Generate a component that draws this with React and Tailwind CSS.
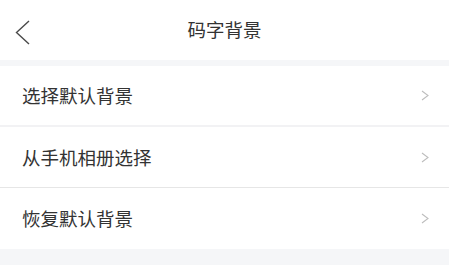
import React from 'react';

const items = [
  { label: '选择默认背景', border: 'border-b-2 border-[#f2f2f4]' },
  { label: '从手机相册选择', border: 'border-b border-[#e6e6e6]' },
  { label: '恢复默认背景', border: '' },
];

const App = () => {
  return (
    <div className="w-[449px] h-[265px] bg-[#f5f6f8] overflow-hidden" style={{ fontFamily: '"Noto Sans CJK SC", "Noto Sans", sans-serif' }}>
      <div className="h-[60px] bg-white flex items-center relative">
        <svg className="absolute left-[15px] top-[20px]" width="15" height="25" viewBox="0 0 15 25">
          <path d="M14 1 L1.5 12.5 L14 24" fill="none" stroke="#4a4a4a" strokeWidth="1.4" />
        </svg>
        <div className="w-full text-center text-[18.5px] text-[#333] leading-none pb-[2px]">码字背景</div>
      </div>
      <div className="h-[6px]" />
      <div className="bg-white">
        {items.map((it) => (
          <div key={it.label} className={`h-[61px] flex items-center justify-between pl-[22px] pr-[20px] ${it.border}`}>
            <span className="text-[18.5px] text-[#333] leading-none">{it.label}</span>
            <svg width="8" height="11" viewBox="0 0 8 11">
              <path d="M1 1 L7 5.5 L1 10" fill="none" stroke="#bdbdbd" strokeWidth="1.1" />
            </svg>
          </div>
        ))}
      </div>
    </div>
  );
};

export default App;
